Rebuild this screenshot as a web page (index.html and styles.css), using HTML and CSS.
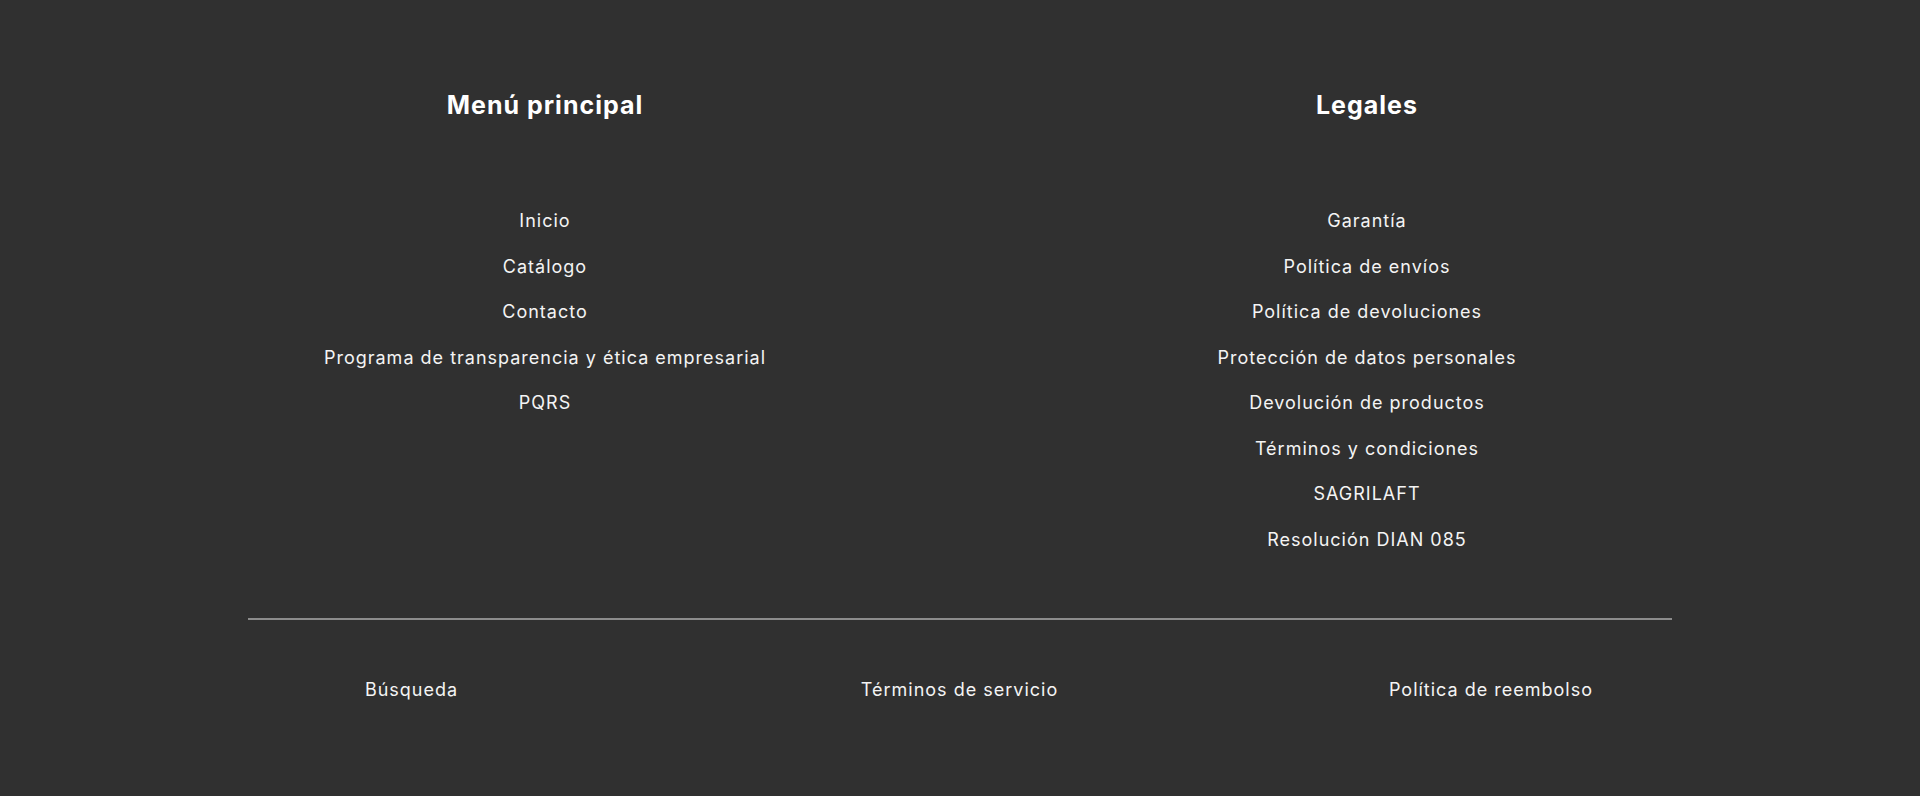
FILE: index.html
```html
<!DOCTYPE html>
<html lang="es">
<head>
<meta charset="utf-8">
<title>Footer</title>
<link rel="stylesheet" href="styles.css">
</head>
<body>
<footer class="footer">
  <div class="footer-menus">
    <div class="menu-col">
      <h2 class="menu-title">Menú principal</h2>
      <ul class="menu-list">
        <li><a href="#">Inicio</a></li>
        <li><a href="#">Catálogo</a></li>
        <li><a href="#">Contacto</a></li>
        <li><a href="#">Programa de transparencia y ética empresarial</a></li>
        <li><a href="#">PQRS</a></li>
      </ul>
    </div>
    <div class="menu-col">
      <h2 class="menu-title">Legales</h2>
      <ul class="menu-list">
        <li><a href="#">Garantía</a></li>
        <li><a href="#">Política de envíos</a></li>
        <li><a href="#">Política de devoluciones</a></li>
        <li><a href="#">Protección de datos personales</a></li>
        <li><a href="#">Devolución de productos</a></li>
        <li><a href="#">Términos y condiciones</a></li>
        <li><a href="#">SAGRILAFT</a></li>
        <li><a href="#">Resolución DIAN 085</a></li>
      </ul>
    </div>
  </div>
  <div class="divider"></div>
  <nav class="footer-bottom">
    <a href="#">Búsqueda</a>
    <a href="#">Términos de servicio</a>
    <a href="#">Política de reembolso</a>
  </nav>
</footer>
</body>
</html>
```
FILE: styles.css
```css
html, body {
  margin: 0;
  padding: 0;
}
body {
  background: #303030;
  min-height: 100vh;
  font-family: Inter, "Noto Sans", "DejaVu Sans", sans-serif;
  color: #ffffff;
}
a {
  color: #f4f4f4;
  text-decoration: none;
}
.footer {
  padding-top: 90px;
}
.footer-menus {
  width: 1644px;
  margin: 0 auto;
  padding-right: 8px;
  display: grid;
  grid-template-columns: 822px 822px;
}
.menu-col {
  text-align: center;
}
.menu-title {
  margin: 0;
  font-size: 25px;
  line-height: 30px;
  font-weight: 700;
  letter-spacing: 1px;
  color: #ffffff;
}
.menu-list {
  list-style: none;
  margin: 78px 0 0;
  padding: 0;
}
.menu-list li {
  font-size: 18px;
  line-height: 45.5px;
  letter-spacing: 1px;
}
.divider {
  width: 1424px;
  height: 2px;
  margin: 56px auto 0;
  background: #8c8c8c;
}
.footer-bottom {
  width: 1424px;
  margin: 58px auto 0;
  display: grid;
  grid-template-columns: 327px 769px 294px;
  font-size: 18px;
  line-height: 24px;
  letter-spacing: 1px;
  text-align: center;
}
```
